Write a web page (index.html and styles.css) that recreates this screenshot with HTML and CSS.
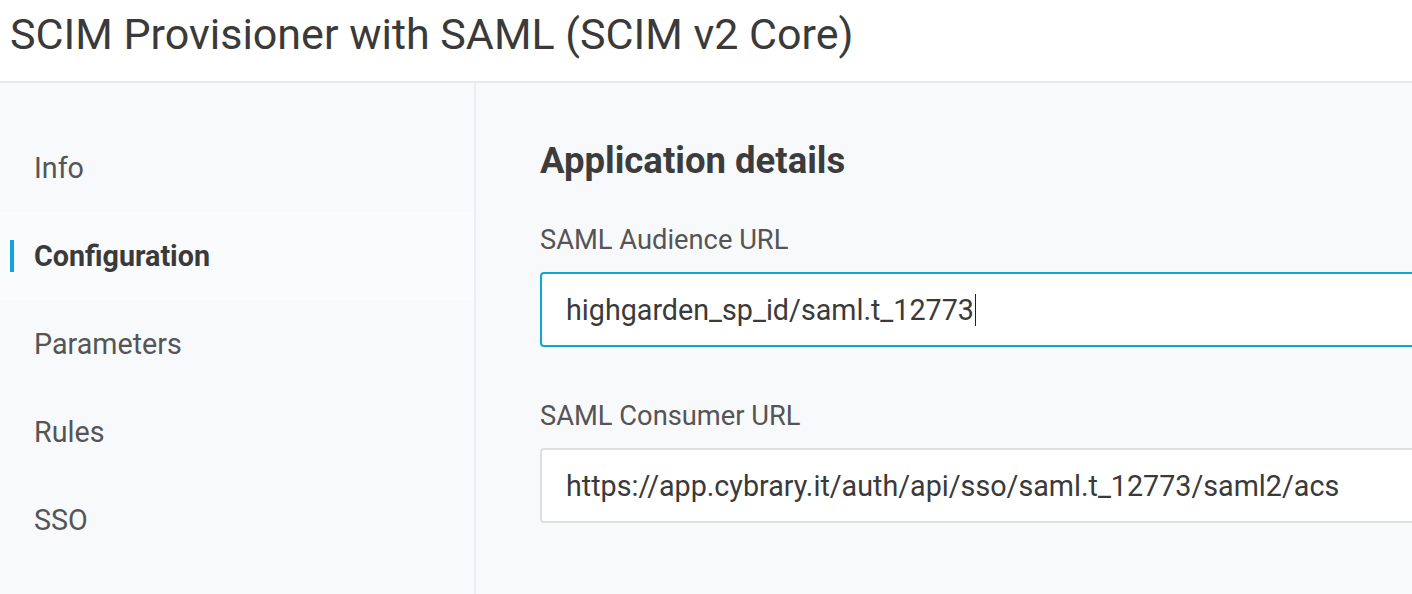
FILE: index.html
```html
<!DOCTYPE html>
<html>
<head>
<meta charset="utf-8">
<link rel="stylesheet" href="styles.css">
</head>
<body>
<header class="header">
  <h1 class="title">SCIM Provisioner with SAML (SCIM v2 Core)</h1>
</header>
<div class="layout">
  <nav class="sidebar">
    <a class="nav-item">Info</a>
    <a class="nav-item active">Configuration</a>
    <a class="nav-item">Parameters</a>
    <a class="nav-item">Rules</a>
    <a class="nav-item">SSO</a>
  </nav>
  <main class="content">
    <h2 class="section-title">Application details</h2>
    <div class="field">
      <label class="label">SAML Audience URL</label>
      <div class="input focused">highgarden_sp_id/saml.t_12773<span class="caret"></span></div>
    </div>
    <div class="field">
      <label class="label">SAML Consumer URL</label>
      <div class="input">https://app.cybrary.it/auth/api/sso/saml.t_12773/saml2/acs</div>
    </div>
  </main>
</div>
</body>
</html>
```
FILE: styles.css
```css
* { box-sizing: border-box; }
html, body { margin: 0; padding: 0; }
body {
  font-family: Roboto, "Noto Sans", sans-serif;
  color: #3e3e3e;
  background: #f8f9fb;
  width: 1412px;
  height: 594px;
  overflow: hidden;
}
.header {
  background: #ffffff;
  height: 83px;
  border-bottom: 2px solid #e6e8eb;
  padding: 10px 0 0 10px;
}
.title {
  margin: 0;
  font-size: 43px;
  font-weight: 400;
  line-height: 48px;
  color: #3a3a3a;
}
.layout {
  display: flex;
  height: 511px;
}
.sidebar {
  width: 476px;
  flex: none;
  border-right: 2px solid #eceef1;
  padding-top: 41px;
  display: flex;
  flex-direction: column;
}
.nav-item {
  display: flex;
  align-items: center;
  height: 88px;
  padding-left: 34px;
  font-size: 28.7px;
  color: #555555;
  position: relative;
}
.nav-item.active {
  background: #fafbfc;
  font-weight: 700;
  color: #3a3a3a;
}
.nav-item.active::before {
  content: "";
  position: absolute;
  left: 10px;
  top: 28px;
  width: 4px;
  height: 32px;
  background: #0ea5dc;
}
.content {
  flex: 1;
  padding: 58px 0 0 64px;
  overflow: hidden;
}
.section-title {
  margin: 0 0 44px 0;
  font-size: 36.5px;
  font-weight: 700;
  line-height: 40px;
  color: #3c3c3c;
}
.field { margin-bottom: 54px; }
.label {
  display: block;
  font-size: 27.3px;
  color: #555555;
  line-height: 30px;
  margin-bottom: 17px;
}
.input {
  width: 1000px;
  height: 75px;
  background: #ffffff;
  border: 2px solid #dedfe1;
  border-radius: 4px;
  padding-left: 24px;
  display: flex;
  align-items: center;
  font-size: 28.7px;
  color: #3a3a3a;
}
.input.focused { border-color: #0ea5dc; }
.caret {
  display: inline-block;
  width: 1px;
  height: 32px;
  background: #222;
  margin-left: 1px;
}
```
